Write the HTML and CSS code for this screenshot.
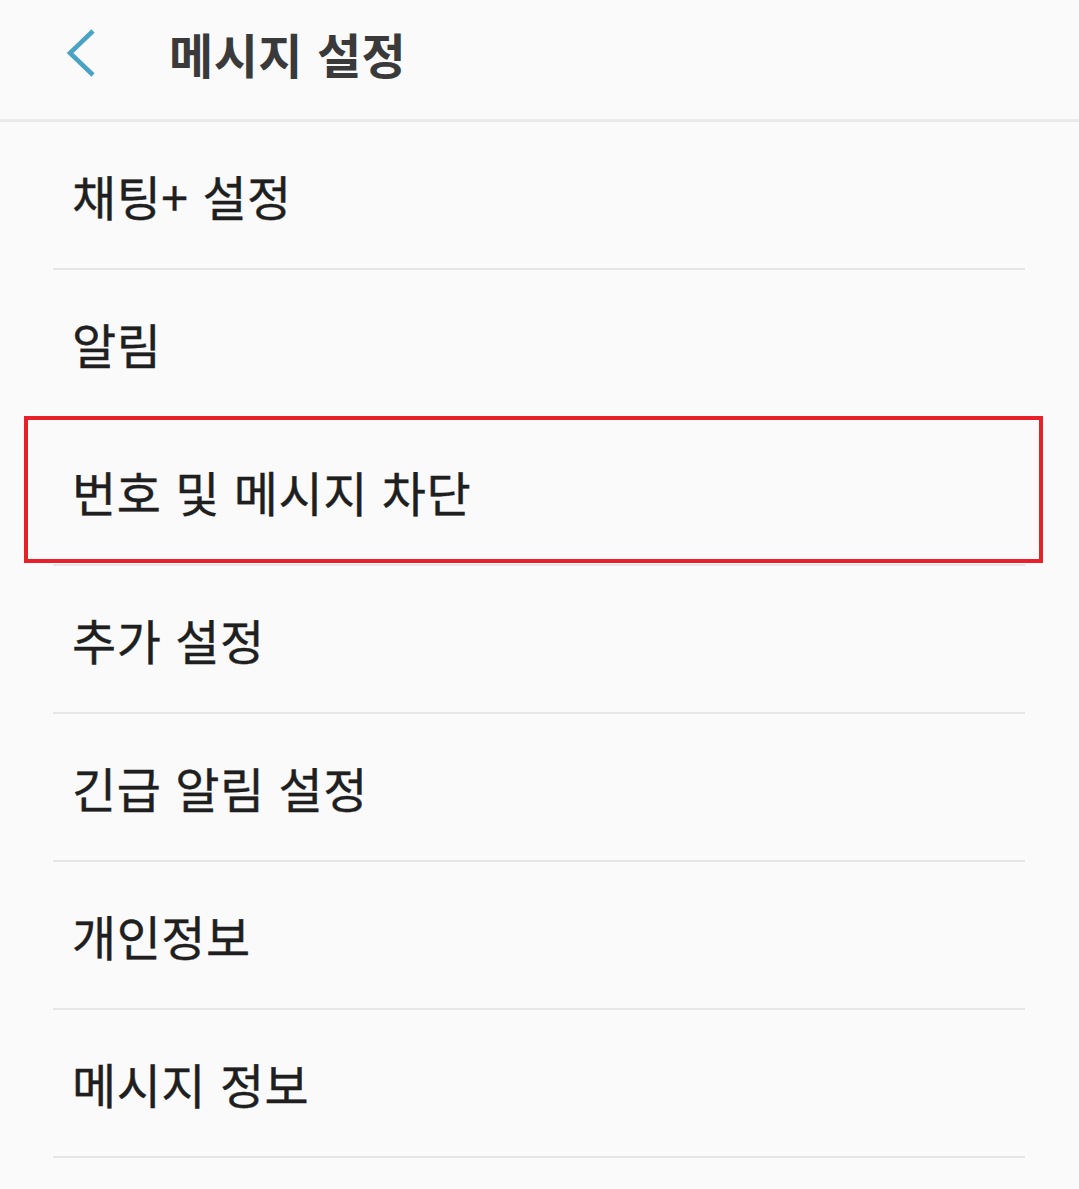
FILE: index.html
```html
<!DOCTYPE html>
<html lang="ko">
<head>
<meta charset="utf-8">
<link rel="stylesheet" href="styles.css">
</head>
<body>
<header class="appbar">
  <button class="back" aria-label="뒤로">
    <svg width="34" height="50" viewBox="0 0 34 50"><polyline points="29,3 6,25 29,47" fill="none" stroke="#4aa3c4" stroke-width="4.5"/></svg>
  </button>
  <h1 class="title">메시지 설정</h1>
</header>
<ul class="menu">
  <li class="item">채팅+ 설정</li>
  <li class="item">알림</li>
  <li class="item highlighted">번호 및 메시지 차단<span class="mark"></span></li>
  <li class="item">추가 설정</li>
  <li class="item">긴급 알림 설정</li>
  <li class="item">개인정보</li>
  <li class="item">메시지 정보</li>
</ul>
</body>
</html>
```
FILE: styles.css
```css
html, body {
  margin: 0;
  padding: 0;
  background: #fafafa;
}
body {
  font-family: "Noto Sans CJK KR", "Noto Sans", sans-serif;
  color: #1f1f1f;
}
.appbar {
  height: 119px;
  border-bottom: 3px solid #e9ebeb;
  display: flex;
  align-items: center;
  box-sizing: content-box;
}
.back {
  border: 0;
  background: none;
  padding: 0;
  margin-left: 64px;
  margin-top: -14px;
  width: 34px;
  height: 50px;
  display: flex;
}
.title {
  margin: -14px 0 0 71px;
  font-size: 48px;
  font-weight: 700;
  color: #3a3a3a;
  letter-spacing: 0.5px;
}
.menu {
  list-style: none;
  margin: 0;
  padding: 0;
}
.item {
  position: relative;
  margin: 0 54px 0 53px;
  padding-left: 19px;
  height: 146px;
  border-bottom: 2px solid #e6e6e6;
  display: flex;
  align-items: center;
  font-size: 48px;
  font-weight: 400;
  letter-spacing: 0.5px;
  -webkit-text-stroke: 0.4px #1f1f1f;
}
.mark {
  position: absolute;
  left: -29px;
  right: -18px;
  top: -2px;
  height: 147px;
  border: 4px solid #e8202a;
  box-sizing: border-box;
}
```
